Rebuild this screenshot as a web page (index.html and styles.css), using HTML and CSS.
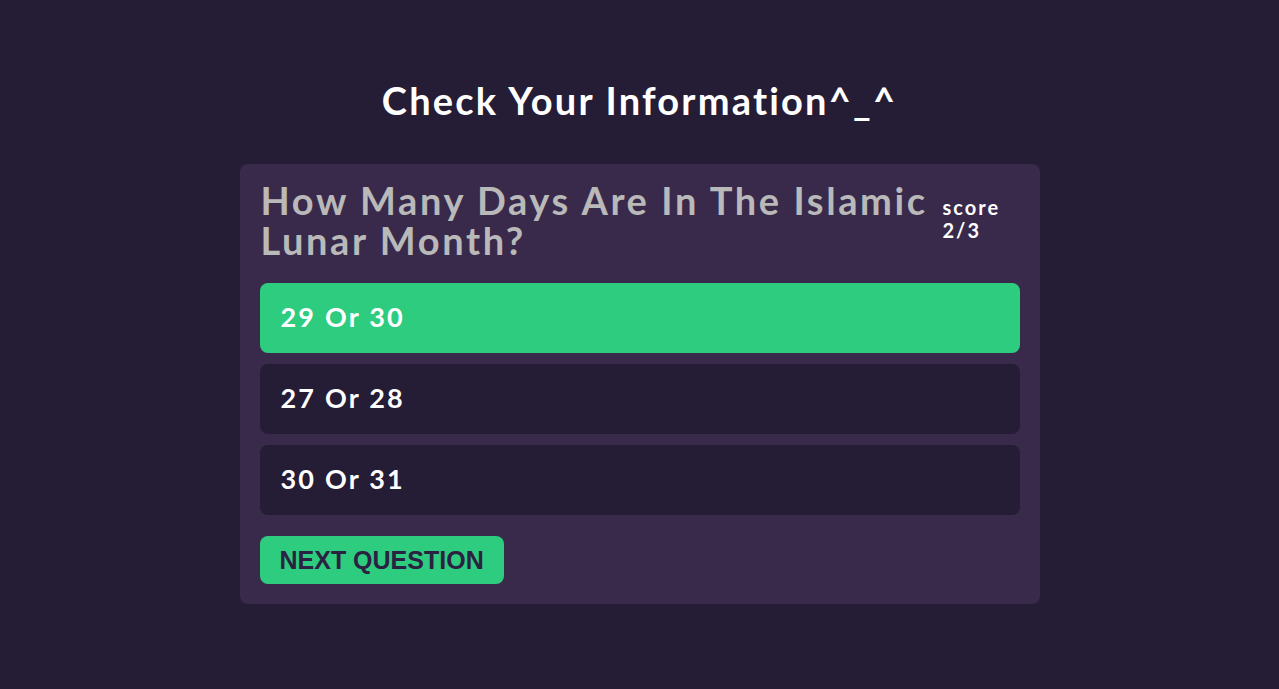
FILE: index.html
```html
<!DOCTYPE html>
<html>
<head>
<meta charset="utf-8">
<link rel="stylesheet" href="styles.css">
</head>
<body>
<main class="page">
  <h1 class="title">Check Your Information^_^</h1>
  <section class="card">
    <div class="head">
      <h2 class="question">How Many Days Are In The Islamic Lunar Month?</h2>
      <div class="score">score<br>2/3</div>
    </div>
    <div class="answers">
      <div class="answer correct">29 Or 30</div>
      <div class="answer">27 Or 28</div>
      <div class="answer">30 Or 31</div>
    </div>
    <button class="next">NEXT QUESTION</button>
  </section>
</main>
</body>
</html>
```
FILE: styles.css
```css
html, body {
  margin: 0;
  padding: 0;
  height: 100%;
  background: #251c35;
}
body {
  font-family: "Lato", "Noto Sans", sans-serif;
  color: #fff;
}
.page {
  display: flex;
  flex-direction: column;
  align-items: center;
  padding-top: 78px;
}
.title {
  margin: 0;
  font-size: 38px;
  font-weight: 700;
  line-height: 44px;
  letter-spacing: 2.2px;
  color: #fff;
}
.card {
  margin-top: 42px;
  width: 800px;
  box-sizing: border-box;
  background: #392a4c;
  border-radius: 8px;
  padding: 16px 20px 20px 20px;
}
.head {
  display: flex;
  align-items: center;
  padding-left: 1px;
}
.question {
  margin: 0;
  flex: 1;
  font-size: 38px;
  line-height: 40px;
  font-weight: 700;
  letter-spacing: 2.6px;
  color: #b9b9b9;
}
.score {
  flex: none;
  width: 77px;
  font-size: 20px;
  line-height: 23px;
  font-weight: 700;
  letter-spacing: 2px;
  color: #fff;
  padding-bottom: 2px;
}
.answers {
  margin-top: 23px;
  display: flex;
  flex-direction: column;
  gap: 11px;
}
.answer {
  height: 70px;
  display: flex;
  align-items: center;
  padding: 0 21px 3px 21px;
  border-radius: 8px;
  background: #251c35;
  font-size: 27px;
  font-weight: 700;
  letter-spacing: 2.2px;
  color: #fff;
  box-sizing: border-box;
}
.answer.correct {
  background: #2ecc7f;
}
.next {
  margin-top: 21px;
  height: 48px;
  padding: 0 20px;
  border: none;
  border-radius: 8px;
  background: #2ecc7f;
  color: #2b2142;
  font-family: "Liberation Sans", Arial, sans-serif;
  font-size: 25px;
  font-weight: 700;
  cursor: pointer;
}
```
